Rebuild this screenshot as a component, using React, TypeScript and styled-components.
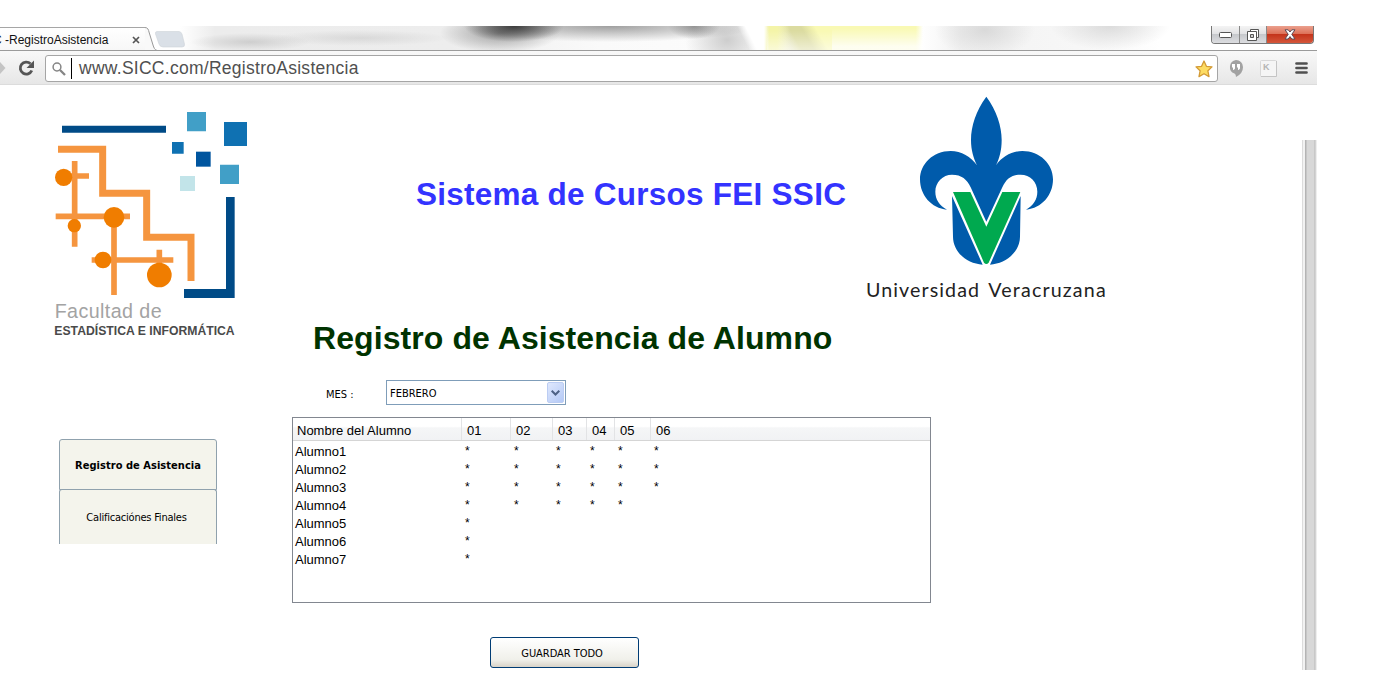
import React from "react";
import styled, { createGlobalStyle } from "styled-components";

const Global = createGlobalStyle`
  * { box-sizing: border-box; }
  body { margin: 0; background: #fff; overflow: hidden; }
`;

const ui = `"DejaVu Sans Condensed", "DejaVu Sans", sans-serif`;
const arial = `"Liberation Sans", Arial, sans-serif`;

const Window = styled.div`
  width: 1317px;
  height: 644px;
  margin-top: 26px;
  display: flex;
  flex-direction: column;
  font-family: ${arial};
  color: #000;
`;

const TabStrip = styled.div`
  height: 24px;
  flex: none;
  display: flex;
  align-items: flex-start;
  background:
    linear-gradient(180deg, transparent 10%, rgba(255, 255, 255, 0.8) 85%) 832px 0 / 91px 100% no-repeat,
    linear-gradient(180deg, transparent 20%, rgba(255, 255, 255, 0.5) 95%) 767px 0 / 65px 100% no-repeat,
    linear-gradient(90deg, transparent, #f4f4a8 8%, #f4f4a8 20%, transparent 40%) 764px 0 / 66px 100% no-repeat,
    linear-gradient(60deg, transparent 12%, #dbdba0 44%, #dbdba0 60%, #f9f9b4 78%) 767px 0 / 65px 100% no-repeat,
    linear-gradient(90deg, #f9f9b4 92%, transparent) 832px 0 / 91px 100% no-repeat,
    linear-gradient(63deg, transparent 36%, #fff 54%, #fff) 732px 0 / 35px 100% no-repeat,
    radial-gradient(ellipse 50px 16px at 514px 0, rgba(40, 40, 40, 0.85), transparent),
    radial-gradient(ellipse 60px 20px at 500px 7px, rgba(90, 90, 90, 0.55), transparent),
    radial-gradient(ellipse 150px 16px at 610px 0, rgba(120, 120, 120, 0.7), transparent),
    radial-gradient(ellipse 26px 13px at 694px 0, rgba(100, 100, 100, 0.6), transparent),
    radial-gradient(ellipse 42px 34px at 727px 14px, rgba(180, 180, 180, 0.65), transparent),
    radial-gradient(ellipse 60px 9px at 250px 16px, rgba(150, 150, 150, 0.35), transparent),
    radial-gradient(ellipse 90px 8px at 360px 12px, rgba(170, 170, 170, 0.3), transparent),
    radial-gradient(ellipse 50px 28px at 985px 4px, rgba(200, 200, 200, 0.6), transparent),
    radial-gradient(ellipse 60px 24px at 1110px 0, rgba(200, 200, 200, 0.6), transparent),
    linear-gradient(90deg, #fff 180px, #ececec 215px, #ededed 450px, #fafafa 600px, #fff 921px, #f2f2f2 960px, #f8f8f8 1100px, #fff 1160px);
`;

const Tab = styled.div`
  width: 145px;
  height: 23px;
  margin-top: 1px;
  display: flex;
  align-items: center;
  justify-content: space-between;
  padding: 1px 5px 0 0;
  border-top: 1px solid #a6a6a6;
  background: linear-gradient(#fff, #f7f7f7);
  overflow: hidden;
`;

const TabTitle = styled.span`
  font-size: 12px;
  line-height: 14px;
  margin-left: -7px;
  white-space: nowrap;
  color: #111;
`;

const TabEdge = styled.svg`
  flex: none;
  margin-top: 1px;
`;

const Controls = styled.div`
  display: flex;
  margin-left: auto;
  margin-right: 3px;
  height: 18px;
  border: 1px solid #777;
  border-top: 0;
  border-radius: 0 0 4px 4px;
  overflow: hidden;
`;

const Control = styled.div<{ $w: number; $close?: boolean }>`
  width: ${(p) => p.$w}px;
  display: flex;
  align-items: center;
  justify-content: center;
  background: ${(p) =>
    p.$close
      ? "linear-gradient(#eba08e 0, #dd7259 45%, #c4341b 50%, #d4563a 100%)"
      : "linear-gradient(#f4f4f4 0, #e2e2e4 45%, #c6c8cc 50%, #dcdde0 100%)"};
  & + & { border-left: 1px solid #888; }
`;

const Toolbar = styled.div`
  height: 35px;
  flex: none;
  display: flex;
  align-items: center;
  border-top: 1px solid #9b9b9b;
  border-bottom: 1px solid #dcdcdc;
  background: linear-gradient(#f8f8f8, #e7e7e7);
`;

const NavIcons = styled.div`
  width: 45px;
  display: flex;
`;

const Address = styled.div`
  width: 1173px;
  height: 27px;
  margin-top: 2px;
  display: flex;
  align-items: center;
  padding: 0 4px 0 6px;
  border: 1px solid #a5a5a5;
  border-radius: 3px;
  background: #fff;
`;

const Caret = styled.span`
  width: 1px;
  height: 21px;
  margin-left: 5px;
  background: #000;
`;

const Url = styled.span`
  flex: 1;
  margin: -2px 0 0 7px;
  font-size: 17.5px;
  line-height: 20px;
  letter-spacing: 0.27px;
  color: #505050;
`;

const Extensions = styled.div`
  flex: 1;
  display: flex;
`;

const Page = styled.div`
  flex: 1;
  display: flex;
  min-height: 0;
`;

const Side = styled.aside`
  width: 292px;
  flex: none;
  padding: 15px 0 0 40px;
`;

const Nav = styled.nav`
  margin: 89px 0 0 19px;
  width: 158px;
`;

const NavItem = styled.div<{ $active?: boolean }>`
  height: ${(p) => (p.$active ? 51 : 55)}px;
  margin-bottom: ${(p) => (p.$active ? -1 : 0)}px;
  padding: ${(p) => (p.$active ? "2px 0 0" : "1px 3px 0 0")};
  display: flex;
  align-items: center;
  justify-content: center;
  border: 1px solid #8fa1ad;
  border-bottom-width: ${(p) => (p.$active ? 1 : 0)}px;
  border-radius: 3px 3px 0 0;
  background: #f4f4ec;
  font: ${(p) => (p.$active ? "bold" : "normal")} 11px/14px ${ui};
  letter-spacing: ${(p) => (p.$active ? 0.04 : -0.22)}px;
`;

const Main = styled.main`
  flex: 1;
  display: flex;
  flex-direction: column;
  align-items: flex-start;
`;

const Masthead = styled.header`
  display: flex;
  height: 225px;
  padding: 5px 0 0 124px;
`;

const SiteTitle = styled.h1`
  margin: 84px 0 0;
  width: 434px;
  font-size: 31.5px;
  line-height: 40px;
  letter-spacing: 0.25px;
  color: #3333ff;
  white-space: nowrap;
`;

const PageTitle = styled.h2`
  margin: 8px 0 0 21px;
  font-size: 32px;
  line-height: 40px;
  letter-spacing: 0.08px;
  color: #003300;
  white-space: nowrap;
`;

const MonthRow = styled.div`
  display: flex;
  align-items: center;
  margin: 22px 0 0 34px;
  font: 11px/14px ${ui};
`;

const MonthLabel = styled.label`
  width: 60px;
  padding-top: 4px;
  letter-spacing: 0;
`;

const Select = styled.div`
  width: 180px;
  height: 25px;
  display: flex;
  align-items: center;
  justify-content: space-between;
  padding: 2px 1px 0 3px;
  border: 1px solid #7f9db9;
  letter-spacing: 0;
`;

const SelectArrow = styled.span`
  width: 17px;
  height: 21px;
  display: flex;
  align-items: center;
  justify-content: center;
  margin-top: -2px;
  border: 1px solid #bccdf3;
  border-radius: 2px;
  background: linear-gradient(135deg, #dfe8fd, #b4c9f6);
`;

const Table = styled.div`
  width: 639px;
  height: 186px;
  margin-top: 12px;
  border: 1px solid #828790;
  font-size: 13px;
`;

const columns = "169px 49px 42px 34px 28px 36px 1fr";

const HeadRow = styled.div`
  height: 23px;
  margin-bottom: 1px;
  display: grid;
  grid-template-columns: ${columns};
  border-bottom: 1px solid #d5d5d5;
  background: linear-gradient(#fff 38%, #f5f6f7 45%, #f1f2f4);
`;

const HeadCell = styled.div`
  padding: 4px 0 0 4px;
  line-height: 17px;
  border-right: 1px solid #e2e3e5;
  white-space: nowrap;
  &:last-child { border-right: 0; }
  & + & { padding-left: 5px; }
`;

const Row = styled.div`
  height: 18px;
  display: grid;
  grid-template-columns: ${columns};
  line-height: 18px;
`;

const Cell = styled.div`
  padding-left: 2px;
  padding-top: 1px;
  & + & { padding-left: 3px; padding-top: 0; font-size: 12px; }
`;

const SaveButton = styled.button`
  width: 149px;
  height: 31px;
  margin: 34px 0 0 198px;
  padding: 2px 5px 0 0;
  border: 1px solid #003c74;
  border-radius: 3px;
  background: linear-gradient(#fff, #f0f0ea 75%, #d8d3c8);
  font: 11px/14px ${ui};
  letter-spacing: -0.05px;
  color: #000;
`;

const ScrollBar = styled.div`
  width: 15px;
  margin-top: 55px;
  border-left: 1px solid #dcdcdc;
  background: linear-gradient(90deg, #f2f2f2 2px, #b4b4b4 2px, #b4b4b4 3px, #d8d8d8 4px, #d8d8d8 11px, #b8b8b8 12px, #eee 13px);
`;

const LogoSvg = styled.svg`
  display: block;
  flex: none;
`;

const FacultyLogo = () => (
  <LogoSvg width="220" height="250" viewBox="0 0 660 750">
    <path fill="#004b87" d="M66 77H378V98H66ZM558 291H584V594H432V567H558Z" />
    <path fill="#419fc7" d="M441 36h57v58h-57zM540 194h57v58h-57z" />
    <path fill="#0f71b2" d="M552 66h69v72h-69zM396 126h35v35h-35z" />
    <path fill="#00559f" d="M468 155h44v45h-44z" />
    <path fill="#c2e4e9" d="M420 228h45v45h-45z" />
    <g fill="none" stroke="#f5953f">
      <path strokeWidth="21" d="M54 148H188V280H320V412H453V543" />
      <path strokeWidth="17" d="M104 183V440M71 228H147M47 349H270M222 352V585M155 480H400M358 449V525" />
    </g>
    <g fill="#f07d00">
      <circle cx="71" cy="232" r="26" />
      <circle cx="222" cy="352" r="31" />
      <circle cx="103" cy="377" r="20" />
      <circle cx="189" cy="480" r="25" />
      <circle cx="358" cy="525" r="37" />
    </g>
    <text x="44" y="655" fontSize="59" textLength="321" fill="#a3a3a3" fontFamily={arial}>Facultad de</text>
    <text x="43" y="705" fontSize="36" textLength="541" fontWeight="bold" fill="#4a4a4a" fontFamily={arial} lengthAdjust="spacingAndGlyphs">ESTADÍSTICA E INFORMÁTICA</text>
  </LogoSvg>
);

const UniversityLogo = () => (
  <LogoSvg width="270" height="220" viewBox="0 0 810 660">
    <g fill="#005bab">
      <path d="M409 20C440 62 455 108 455 150C455 182 448 205 438 226C456 200 485 183 517 183C570 183 609 222 609 268C609 316 575 355 528 359C550 346 562 328 562 305C562 275 540 254 512 254C484 254 468 268 457 292L409 395L362 292C351 268 335 254 306 254C278 254 256 277 256 305C256 328 268 346 291 359C244 355 210 316 210 268C210 222 249 183 302 183C334 183 363 200 381 226C371 205 363 182 363 150C363 108 378 62 409 20Z" />
      <path d="M306 318L398 524C350 521 309 485 309 440ZM512 318L420 524C468 521 510 485 510 440Z" />
    </g>
    <path fill="#00a94f" d="M309 306H361L409 410L457 306H511L416 518Q409 526 402 518Z" />
    <g fill="#222" fontFamily='"Lato", sans-serif' fontSize="59">
      <text x="48" y="620" textLength="339">Universidad</text>
      <text x="415" y="620" textLength="352">Veracruzana</text>
    </g>
  </LogoSvg>
);

const students = [6, 6, 6, 5, 1, 1, 1];
const days = ["01", "02", "03", "04", "05", "06"];

export default function App() {
  return (
    <>
      <Global />
      <Window>
        <TabStrip>
          <Tab>
            <TabTitle>C -RegistroAsistencia</TabTitle>
            <svg width="8" height="8" viewBox="0 0 8 8" stroke="#555" strokeWidth="1.7"><path d="M1 1L7 7M7 1L1 7" /></svg>
          </Tab>
          <TabEdge width="40" height="24" viewBox="0 0 40 24">
            <path d="M0 0L1 .5C3 1 3.500 3 4 5L8 18C9 21 9.500 23 12 24H0Z" fill="#f9f9f9" />
            <path d="M0 .5C3 .5 3.500 3 4 5L8 18C9 21 9.500 22.500 12 23.500" fill="none" stroke="#999" />
            <path d="M12 4.500H34Q36 4.500 37 7L39.500 17Q40 20 37 20H18Q15 20 14 17L10.500 7Q10 4.500 12 4.500Z" fill="#dae0e7" stroke="#cfd3d8" strokeWidth=".6" />
          </TabEdge>
          <Controls>
            <Control $w={27}>
              <svg width="13" height="6"><rect x=".5" y=".5" width="12" height="5" rx="1" fill="#fff" stroke="#555" /></svg>
            </Control>
            <Control $w={27}>
              <svg width="12" height="12" fill="#fff" stroke="#555"><path d="M3.500 .5H11.500V8.500H3.500Z" /><path d="M.5 2.500H9.500V11.500H.5Z" /><path d="M3.500 5.500H6.500V8.500H3.500Z" fill="#ccc" /></svg>
            </Control>
            <Control $w={47} $close>
              <svg width="12" height="11" viewBox="0 0 12 11"><path d="M1 .8H4.200L6 3L7.800 .8H11L7.800 5.300L11 10H7.800L6 7.600L4.200 10H1L4.200 5.300Z" fill="#fff" stroke="#5c4a55" /></svg>
            </Control>
          </Controls>
        </TabStrip>
        <Toolbar>
          <NavIcons>
            <svg width="45" height="24" viewBox="0 0 45 24">
              <path d="M0 6L5.500 12L0 18Z" fill="#c4c4c4" />
              <path d="M31.800 14.500A6 6 0 1 1 30.500 7.800" fill="none" stroke="#555" strokeWidth="2.800" />
              <path d="M34 4.500V12H26.500Z" fill="#555" />
            </svg>
          </NavIcons>
          <Address>
            <svg width="14" height="14" viewBox="0 0 14 14" fill="none" stroke="#858585">
              <circle cx="5" cy="5" r="3.900" strokeWidth="1.500" />
              <path d="M8 8L13 13" strokeWidth="2.300" />
            </svg>
            <Caret />
            <Url>www.SICC.com/RegistroAsistencia</Url>
            <svg width="18" height="18" viewBox="0 0 18 18">
              <path d="M9 1L11.400 6.300L17 6.900L12.900 10.800L14 16.600L9 13.700L4 16.600L5.100 10.800L1 6.900L6.600 6.300Z" fill="#fddc62" stroke="#d39a35" strokeWidth="1.300" strokeLinejoin="round" />
            </svg>
          </Address>
          <Extensions>
            <svg width="99" height="28" viewBox="0 0 99 28">
              <path d="M18 6a7 7 0 0 0-1.500 13.500q1.500 .5 1.500 3.500q7-3.500 7-10a7 7 0 0 0-7-7Z" fill="#a2a2a2" />
              <path d="M14 10h3v4.500q-1 1.500-2 1.500v-2.500h-1ZM19 10h3v4.500q-1 1.500-2 1.500v-2.500h-1Z" fill="#fff" />
              <rect x="42.500" y="6.500" width="16" height="16" rx="1" fill="#f5f5f5" stroke="#d8d8d8" />
              <path d="M58.500 7V22.500H43" stroke="#c4c4c4" fill="none" />
              <text x="45" y="16" fontSize="9" fill="#b4b4b4" fontFamily={arial} fontWeight="bold">K</text>
              <path d="M78.500 9.500H88.500M78.500 14H88.500M78.500 18.500H88.500" stroke="#505050" strokeWidth="2.700" strokeLinecap="round" />
            </svg>
          </Extensions>
        </Toolbar>
        <Page>
          <Side>
            <FacultyLogo />
            <Nav>
              <NavItem $active>Registro de Asistencia</NavItem>
              <NavItem>Calificaciónes Finales</NavItem>
            </Nav>
          </Side>
          <Main>
            <Masthead>
              <SiteTitle>Sistema de Cursos FEI SSIC</SiteTitle>
              <UniversityLogo />
            </Masthead>
            <PageTitle>Registro de Asistencia de Alumno</PageTitle>
            <MonthRow>
              <MonthLabel>MES :</MonthLabel>
              <Select>
                FEBRERO
                <SelectArrow>
                  <svg width="9" height="6" fill="none" stroke="#4d6185" strokeWidth="2"><path d="M.7 .8L4.500 4.500L8.300 .8" /></svg>
                </SelectArrow>
              </Select>
            </MonthRow>
            <Table>
              <HeadRow>
                <HeadCell>Nombre del Alumno</HeadCell>
                {days.map((d) => <HeadCell key={d}>{d}</HeadCell>)}
              </HeadRow>
              {students.map((count, i) => (
                <Row key={i}>
                  <Cell>Alumno{i + 1}</Cell>
                  {days.slice(0, count).map((d) => <Cell key={d}>*</Cell>)}
                </Row>
              ))}
            </Table>
            <SaveButton>GUARDAR TODO</SaveButton>
          </Main>
          <ScrollBar />
        </Page>
      </Window>
    </>
  );
}
